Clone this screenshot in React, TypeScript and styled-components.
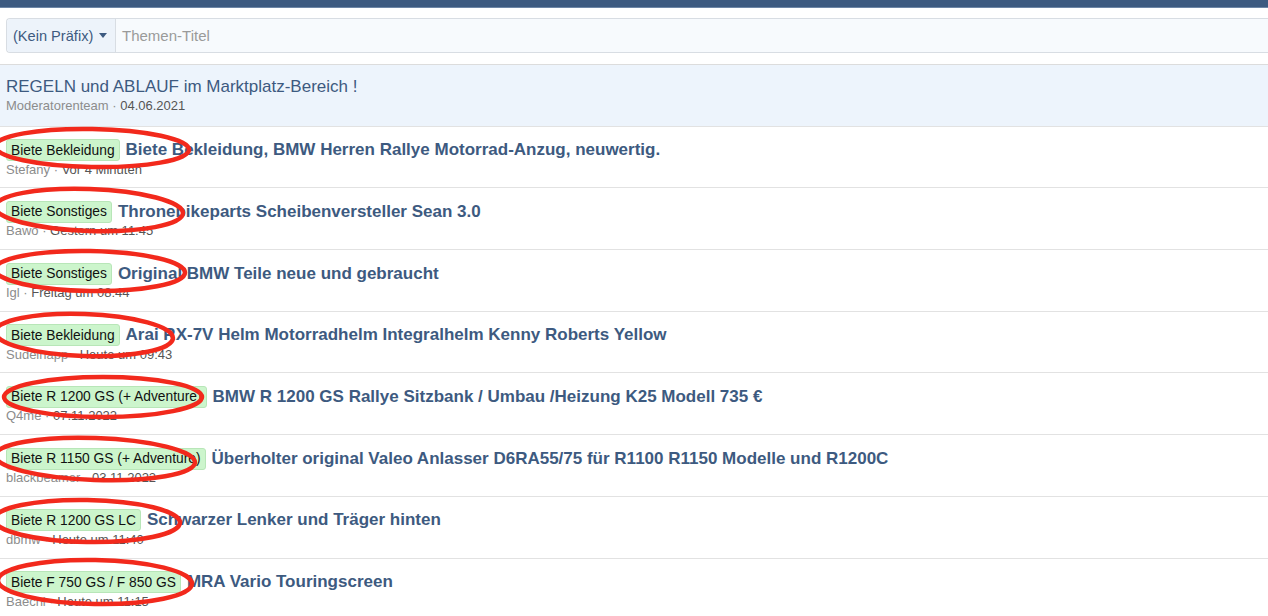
import styled, { createGlobalStyle } from 'styled-components';

const GlobalStyle = createGlobalStyle`
  body {
    margin: 0;
    background: #fff;
    font-family: "Liberation Sans", Arial, Helvetica, sans-serif;
    color: #141414;
  }
`;

const Page = styled.div`
  width: 1268px;
  height: 616px;
  overflow: hidden;
`;

const TopBar = styled.div`
  height: 7px;
  background: #3d5a80;
  border-bottom: 1px solid #6d86a6;
`;

const QuickForm = styled.div`
  margin: 10px 0 0 6px;
  height: 33px;
  display: flex;
  border: 1px solid #d8dde3;
  border-right: none;
  border-radius: 4px 0 0 4px;
  background: #f7fafd;
`;

const PrefixButton = styled.div`
  width: 109px;
  display: flex;
  align-items: center;
  gap: 6px;
  padding-left: 6px;
  box-sizing: border-box;
  background: #edf3fa;
  border-right: 1px solid #d8dde3;
  border-radius: 4px 0 0 4px;
  color: #3d5a80;
  font-size: 14.6px;
  white-space: nowrap;
`;

const Caret = styled.span`
  width: 0;
  height: 0;
  border-left: 4px solid transparent;
  border-right: 4px solid transparent;
  border-top: 5px solid #3d5a80;
`;

const TitleInput = styled.div`
  display: flex;
  align-items: center;
  padding-left: 6px;
  color: #9a9a9a;
  font-size: 15px;
`;

const List = styled.div`
  margin-top: 11px;
  border-top: 1px solid #dcdcdc;
`;

const Row = styled.div<{ $sticky?: boolean }>`
  position: relative;
  height: 61.7px;
  box-sizing: border-box;
  padding: ${(p) => (p.$sticky ? '10px 6px 0' : '12px 6px 0')};
  border-bottom: 1px solid #e2e2e2;
  background: ${(p) => (p.$sticky ? '#edf4fc' : '#fff')};
  display: flex;
  flex-direction: column;
`;

const TitleLine = styled.div`
  display: flex;
  align-items: center;
  height: 23px;
`;

const Label = styled.span`
  display: inline-flex;
  align-items: center;
  height: 20px;
  padding: 0 4px;
  margin-right: 6px;
  border: 1px solid #b8e6b8;
  border-radius: 3px;
  background: #ccf5cc;
  color: #111;
  font-size: 13.8px;
  white-space: nowrap;
`;

const ThreadTitle = styled.span<{ $sticky?: boolean }>`
  color: #3d5a80;
  font-size: 17px;
  font-weight: ${(p) => (p.$sticky ? 400 : 700)};
  white-space: nowrap;
`;

const Meta = styled.div`
  font-size: 13px;
  color: #8c8c8c;
  margin-top: 0;
`;

const MetaDate = styled.span`
  color: #555;
`;

const Mark = styled.svg`
  position: absolute;
  left: -10px;
  top: 0;
  overflow: visible;
  pointer-events: none;
`;

interface IThread {
  label: string;
  title: string;
  user: string;
  date: string;
  mark: { cx: number; cy: number; rx: number; ry: number; rot: number };
}

const threads: IThread[] = [
  { label: 'Biete Bekleidung', title: 'Biete Bekleidung, BMW Herren Rallye Motorrad-Anzug, neuwertig.', user: 'Stefany', date: 'Vor 4 Minuten', mark: { cx: 92, cy: 21, rx: 97, ry: 19, rot: 1 } },
  { label: 'Biete Sonstiges', title: 'Thronebikeparts Scheibenversteller Sean 3.0', user: 'Bawo', date: 'Gestern um 11:45', mark: { cx: 89, cy: 22, rx: 94, ry: 21, rot: 2 } },
  { label: 'Biete Sonstiges', title: 'Original BMW Teile neue und gebraucht', user: 'Igl', date: 'Freitag um 08:44', mark: { cx: 90, cy: 21, rx: 95, ry: 20, rot: 1 } },
  { label: 'Biete Bekleidung', title: 'Arai RX-7V Helm Motorradhelm Integralhelm Kenny Roberts Yellow', user: 'Sudelnapp', date: 'Heute um 09:43', mark: { cx: 84, cy: 23, rx: 89, ry: 21, rot: 2 } },
  { label: 'Biete R 1200 GS (+ Adventure)', title: 'BMW R 1200 GS Rallye Sitzbank / Umbau /Heizung K25 Modell 735 €', user: 'Q4me', date: '07.11.2022', mark: { cx: 103, cy: 24, rx: 99, ry: 20, rot: 0 } },
  { label: 'Biete R 1150 GS (+ Adventure)', title: 'Überholter original Valeo Anlasser D6RA55/75 für R1100 R1150 Modelle und R1200C', user: 'blackbeamer', date: '03.11.2022', mark: { cx: 95, cy: 24, rx: 100, ry: 21, rot: 2 } },
  { label: 'Biete R 1200 GS LC', title: 'Schwarzer Lenker und Träger hinten', user: 'dbmw', date: 'Heute um 11:40', mark: { cx: 87, cy: 24, rx: 93, ry: 21, rot: 1 } },
  { label: 'Biete F 750 GS / F 850 GS', title: 'MRA Vario Touringscreen', user: 'Baechi', date: 'Heute um 11:15', mark: { cx: 95, cy: 23, rx: 97, ry: 22, rot: 1 } },
];

function Ellipse({ mark }: { mark: IThread['mark'] }) {
  return (
    <Mark width={260} height={70}>
      <ellipse
        cx={mark.cx + 10}
        cy={mark.cy}
        rx={mark.rx}
        ry={mark.ry}
        transform={`rotate(${mark.rot} ${mark.cx + 10} ${mark.cy})`}
        fill="none"
        stroke="#f2291c"
        strokeWidth={4.5}
      />
    </Mark>
  );
}

function App() {
  return (
    <Page>
      <GlobalStyle />
      <TopBar />
      <QuickForm>
        <PrefixButton>
          (Kein Präfix) <Caret />
        </PrefixButton>
        <TitleInput>Themen-Titel</TitleInput>
      </QuickForm>
      <List>
        <Row $sticky>
          <TitleLine>
            <ThreadTitle $sticky>REGELN und ABLAUF im Marktplatz-Bereich !</ThreadTitle>
          </TitleLine>
          <Meta>
            Moderatorenteam · <MetaDate>04.06.2021</MetaDate>
          </Meta>
        </Row>
        {threads.map((t, i) => (
          <Row key={i}>
            <TitleLine>
              <Label>{t.label}</Label>
              <ThreadTitle>{t.title}</ThreadTitle>
            </TitleLine>
            <Meta>
              {t.user} · <MetaDate>{t.date}</MetaDate>
            </Meta>
            <Ellipse mark={t.mark} />
          </Row>
        ))}
      </List>
    </Page>
  );
}

export default App;
